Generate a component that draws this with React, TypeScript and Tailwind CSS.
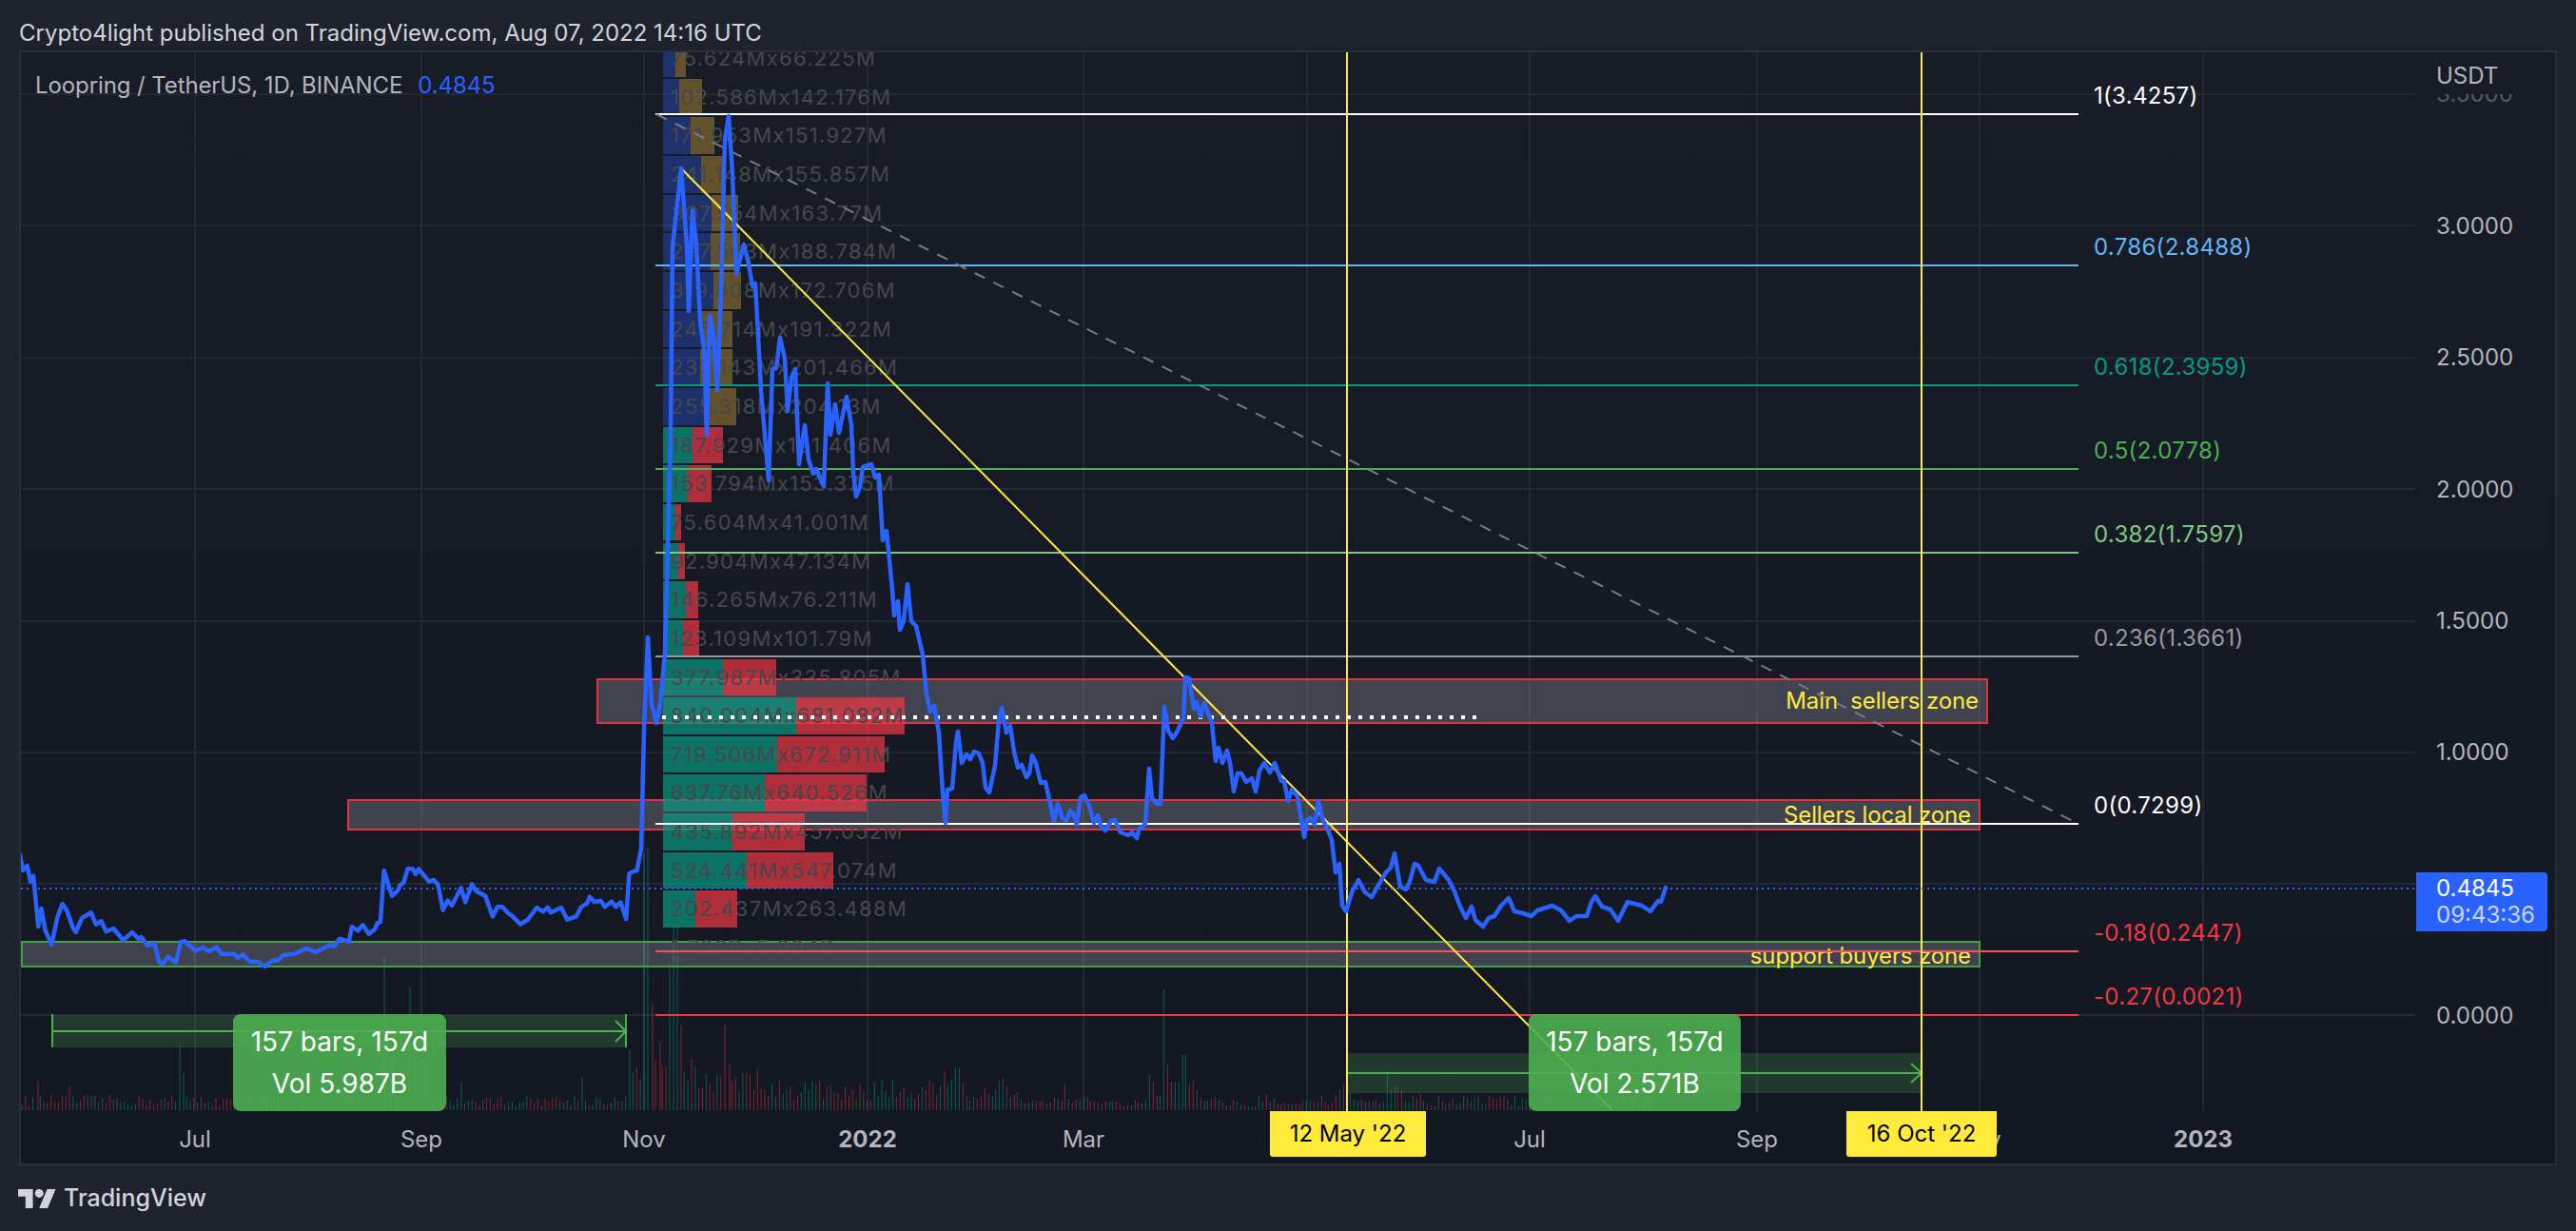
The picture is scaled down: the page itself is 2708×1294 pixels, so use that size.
import React from "react";

type Row = { a: number; b: number; label: string; kind: "cool" | "warm" | "none" };

const rows: Row[] = [
  { a: 75.624, b: 66.225, label: "75.624Mx66.225M", kind: "cool" },
  { a: 102.586, b: 142.176, label: "102.586Mx142.176M", kind: "cool" },
  { a: 171.953, b: 151.927, label: "171.953Mx151.927M", kind: "cool" },
  { a: 241.148, b: 155.857, label: "241.148Mx155.857M", kind: "cool" },
  { a: 307.554, b: 163.77, label: "307.554Mx163.77M", kind: "cool" },
  { a: 297.563, b: 188.784, label: "297.563Mx188.784M", kind: "cool" },
  { a: 319.808, b: 172.706, label: "319.808Mx172.706M", kind: "cool" },
  { a: 245.714, b: 191.322, label: "245.714Mx191.322M", kind: "cool" },
  { a: 233.143, b: 201.466, label: "233.143Mx201.466M", kind: "cool" },
  { a: 255.318, b: 204.13, label: "255.318Mx204.13M", kind: "cool" },
  { a: 187.929, b: 191.406, label: "187.929Mx191.406M", kind: "warm" },
  { a: 153.794, b: 153.375, label: "153.794Mx153.375M", kind: "warm" },
  { a: 75.604, b: 41.001, label: "75.604Mx41.001M", kind: "warm" },
  { a: 92.904, b: 47.134, label: "92.904Mx47.134M", kind: "warm" },
  { a: 146.265, b: 76.211, label: "146.265Mx76.211M", kind: "warm" },
  { a: 123.109, b: 101.79, label: "123.109Mx101.79M", kind: "warm" },
  { a: 377.987, b: 335.805, label: "377.987Mx335.805M", kind: "warm" },
  { a: 840.004, b: 681.082, label: "840.004Mx681.082M", kind: "warm" },
  { a: 719.506, b: 672.911, label: "719.506Mx672.911M", kind: "warm" },
  { a: 637.76, b: 640.526, label: "637.76Mx640.526M", kind: "warm" },
  { a: 435.892, b: 457.052, label: "435.892Mx457.052M", kind: "warm" },
  { a: 524.441, b: 547.074, label: "524.441Mx547.074M", kind: "warm" },
  { a: 202.437, b: 263.488, label: "202.437Mx263.488M", kind: "warm" },
  { a: 0, b: 0, label: "1.792Bx5.904B", kind: "none" },
];

const PX_PER_M = 0.1671;

const leftPart: [number, number][] = [
  [33,145],[38,195],[45,180],[50,230],[55,212],[63,372],[68,315],[75,385],[85,428],[95,340],[103,300],[110,320],[120,375],[125,390],[135,345],[150,328],[158,365],[167,355],[175,388],[187,378],[203,415],[218,390],[228,410],[233,405],[243,432],[255,427],[262,483],[268,490],[277,467],[290,485],[298,420],[305,418],[322,448],[335,438],[345,450],[357,437],[365,458],[385,458],[392,470],[400,460],[412,483],[425,483],[436,498],[448,480],[458,478],[467,462],[485,458],[505,440],[520,452],[545,430],[550,435],[560,410],[575,420],[580,372],[590,385],[598,367],[608,395],[618,380],[622,360],[627,358],[633,195],[646,275],[655,260],[660,240],[665,235],[672,190],[680,190],[685,207],[690,190],[707,230],[715,225],[722,240],[730,320],[738,290],[745,305],[760,250],[767,295],[778,238],[785,260],[800,275],[812,340],[820,310],[828,310],[838,330],[845,340],[858,365],[870,350],[885,312],[895,325],[903,312],[908,328],[925,312],[935,350],[950,340],[958,310],[968,298],[972,278],[980,295],[990,290],[997,310],[1008,293],[1015,310],[1023,295],[1032,348],[1037,205],[1045,197],[1050,195],
];

const rest: [number, number][] = [
  [674,892],[677,767],[681,670],[685,740],[690,760],[694,740],[699,687],[704,500],[705,460],[707,260],[716,177],[722,257],[724,327],[728,221],[732,257],[736,337],[740,367],[743,457],[746,332],[750,353],[754,410],[758,307],[762,147],[766,122],[770,183],[774,288],[782,257],[787,277],[791,301],[794,298],[797,353],[800,410],[808,505],[812,388],[816,387],[820,355],[825,377],[828,432],[832,397],[836,388],[840,488],[846,447],[850,483],[855,498],[858,493],[866,511],[870,403],[873,457],[878,425],[882,455],[890,417],[895,447],[897,497],[900,522],[904,512],[907,491],[916,488],[920,502],[924,499],[928,568],[932,558],[938,620],[940,647],[944,632],[946,662],[950,653],[954,614],[958,653],[963,658],[970,688],[974,730],[978,748],[982,742],[987,770],[991,833],[994,865],[996,830],[1001,829],[1005,780],[1007,769],[1011,802],[1016,793],[1020,798],[1024,790],[1029,792],[1033,802],[1036,828],[1040,833],[1046,805],[1050,757],[1053,744],[1058,770],[1062,763],[1066,790],[1070,807],[1074,804],[1079,817],[1082,813],[1085,794],[1089,802],[1094,823],[1099,822],[1108,863],[1112,845],[1117,860],[1121,863],[1125,852],[1128,855],[1132,867],[1136,838],[1140,836],[1145,847],[1150,865],[1154,857],[1158,870],[1162,873],[1168,863],[1172,862],[1178,875],[1186,878],[1190,875],[1195,881],[1198,870],[1201,870],[1204,865],[1208,808],[1211,839],[1216,845],[1220,845],[1224,743],[1228,768],[1233,776],[1237,770],[1244,755],[1246,712],[1250,713],[1255,745],[1258,738],[1262,753],[1266,739],[1274,760],[1278,800],[1281,786],[1285,802],[1290,789],[1293,802],[1297,832],[1301,813],[1305,813],[1310,822],[1316,818],[1320,832],[1324,810],[1329,802],[1335,812],[1340,802],[1347,821],[1350,821],[1354,842],[1358,830],[1364,837],[1366,850],[1371,880],[1374,862],[1378,860],[1382,867],[1386,842],[1391,863],[1395,870],[1400,883],[1404,917],[1408,908],[1411,952],[1415,958],[1421,938],[1428,925],[1435,938],[1442,943],[1448,932],[1457,917],[1462,912],[1466,897],[1472,932],[1478,935],[1482,927],[1487,908],[1491,910],[1499,925],[1508,927],[1513,913],[1523,925],[1529,937],[1535,953],[1541,965],[1547,953],[1551,967],[1559,974],[1565,965],[1571,963],[1578,952],[1586,944],[1592,958],[1601,960],[1610,963],[1616,957],[1632,952],[1641,957],[1650,968],[1657,963],[1668,963],[1673,948],[1677,942],[1684,953],[1693,956],[1701,968],[1711,948],[1718,950],[1726,952],[1735,958],[1743,947],[1746,948],[1751,933],
];

const pricePoints = [
  ...leftPart.map(([x, y]) => [x / 1.568, 850 + y / 3] as [number, number]),
  ...rest,
]
  .map(([x, y]) => `${x.toFixed(1)},${y.toFixed(1)}`)
  .join(" ");

const measured =
  "1t405 13t365 25t368 37r417 49t456 58r470 70t459 82r465 94r456 106r430 118r447 130t456 140t438 151t408 163t402 175r426 187t459 199r453 208r444 220t465 232r477 244t474 256t471 268r474 280r471 289r474 301t480 313r474 325r462 337t465 349r471 358r420 370t465 382r477 394r468 406t468 418t462 430r462 439r474 451r474 463t477 475r480 487r474 499t474 508t474 520r474 532r480 544r489 556r486 568t486 580r468 589t474 601r480 613t468 625t390 637r414 649r456 658t456 670t120 682r357 694r411 706t414 718t414 730t327 739t324 751r420 763r408 775t438 787r462 799t471 808t471 820r465 832r459 844t471 856r477 868t486 880r486 889r468 901t474 913t483 925r483 937t489 949t489 958r489 970t456 982t471 994r450 1006r471 1018t465 1030r480 1039r483 1051r477 1063r480 1075t483 1087r480 1099r483 1108r471 1120t474 1132t471 1144r474 1156t474 1168r456 1180r474 1189r483 1201r477 1213r453 1225t435 1237r420 1249r435 1258t444 1270t468 1282t471 1294r468 1306t474 1318r474 1330t474 1339r471 1351t480 1363t474 1375t384 1387t438 1399t426 1408r423 1420r438 1432t471 1444t474 1456t456 1468r462 1480r450 1489t471 1501r480 1513r486 1525r489 1537t456 1549r471";

const spikes: [number, number, "t" | "r"][] = [
  [40,1137,"r"],[73,1142,"r"],[189,1098,"t"],[193,1128,"t"],[404,1007,"t"],[411,1110,"r"],[431,1038,"t"],[435,1112,"r"],[485,1137,"t"],[612,1132,"t"],[662,1104,"t"],[677,898,"t"],[681,890,"t"],[686,1055,"r"],[689,1115,"r"],[694,1095,"r"],[704,1013,"t"],[708,972,"t"],[712,972,"t"],[716,1078,"r"],[727,1113,"r"],[762,1077,"r"],[767,1119,"r"],[993,1127,"r"],
];

function buildVolume() {
  const bars: { x: number; top: number; c: string }[] = [];
  let s = 12345;
  const rnd = () => {
    s = (s * 16807) % 2147483647;
    return s / 2147483647;
  };
  const BASE = 1167;
  for (let i = 0; i < 449; i++) {
    const x = 23 + 3.847 * i;
    if (x >= 999 && x < 1517) continue;
    if (x > 1736) continue;
    const spike = spikes.find((p) => Math.abs(p[0] - x) < 1.93);
    if (spike) {
      bars.push({ x: spike[0], top: spike[1], c: spike[2] });
      continue;
    }
    let h = 5 + rnd() * 11;
    if (x > 660 && x < 800) h = 18 + rnd() * 30;
    else if (x >= 800 && x < 1000) h = 10 + rnd() * 22;
    bars.push({ x, top: BASE - h, c: rnd() > 0.5 ? "t" : "r" });
  }
  measured.split(" ").forEach((tok) => {
    const m = tok.match(/^(\d+)([tr])(\d+)$/);
    if (m) bars.push({ x: 1000 + Number(m[1]) / 3, top: 1000 + Number(m[3]) / 3, c: m[2] });
  });
  return { bars, BASE };
}
const volume = buildVolume();

const gridY = [99, 237, 376, 514, 653, 791, 929, 1067];
const gridX = [205, 443, 677, 912, 1139, 1374, 1608, 1847, 2081, 2316];

const PLOT_TOP = 55;
const FIB_LABEL_LIFT = 19;

const fibs: { y: number; stroke: string; text: string; cls: string }[] = [
  { y: 120, stroke: "#ffffff", text: "1(3.4257)", cls: "text-white" },
  { y: 279, stroke: "#64b5f6", text: "0.786(2.8488)", cls: "text-[#64b5f6]" },
  { y: 405, stroke: "#089981", text: "0.618(2.3959)", cls: "text-[#089981]" },
  { y: 493, stroke: "#4caf50", text: "0.5(2.0778)", cls: "text-[#4caf50]" },
  { y: 581, stroke: "#81c784", text: "0.382(1.7597)", cls: "text-[#81c784]" },
  { y: 690, stroke: "#9598a1", text: "0.236(1.3661)", cls: "text-[#9598a1]" },
  { y: 866, stroke: "#ffffff", text: "0(0.7299)", cls: "text-white" },
  { y: 1000, stroke: "#f7525f", text: "-0.18(0.2447)", cls: "text-[#f23645]" },
  { y: 1067, stroke: "#f23645", text: "-0.27(0.0021)", cls: "text-[#f23645]" },
];

function RangeLabel({ vol, className }: { vol: string; className: string }) {
  return (
    <div
      className={`absolute top-[1011px] flex h-[102px] flex-col items-center justify-center rounded-lg bg-[#4caf50]/90 text-[28px] leading-[44px] text-white ${className}`}
    >
      <span>157 bars, 157d</span>
      <span>{vol}</span>
    </div>
  );
}

function Plot() {
  return (
    <div className="relative h-[1113px] w-[2517px] shrink-0 overflow-hidden">
      <svg className="absolute left-0 top-0 h-[1113px] w-[2517px]" viewBox="22 55 2517 1113">
        {gridY.map((y) => (
          <line key={y} x1={22} x2={2539} y1={y} y2={y} stroke="#242832" strokeWidth={2} />
        ))}
        {gridX.map((x) => (
          <line key={x} x1={x} x2={x} y1={55} y2={1168} stroke="#242832" strokeWidth={2} />
        ))}
        {volume.bars.map((b, i) => (
          <line
            key={i}
            x1={b.x}
            x2={b.x}
            y1={b.top}
            y2={volume.BASE}
            stroke={b.c === "t" ? "rgba(8,153,129,0.55)" : "rgba(242,54,69,0.5)"}
            strokeWidth={1}
          />
        ))}
      </svg>

      <div className="absolute left-[605px] top-[658px] flex h-[48px] w-[1463px] items-center justify-end border-2 border-[#e2323f] bg-[rgba(178,181,190,0.28)] pr-2 text-[24px] leading-none tracking-[-0.12px] whitespace-pre text-[#ffeb3b]">
        Main  sellers zone
      </div>
      <div className="absolute left-[343px] top-[785px] flex h-[33px] w-[1717px] items-center justify-end border-2 border-[#e2323f] bg-[rgba(178,181,190,0.28)] pr-2 text-[24px] leading-none tracking-[-0.12px] text-[#ffeb3b]">
        Sellers local zone
      </div>
      <div className="absolute left-0 top-[934px] flex h-[28px] w-[2060px] items-center justify-end border-2 border-[#43a047] bg-[rgba(178,181,190,0.28)] pr-2 text-[24px] leading-none tracking-[-0.12px] text-[#ffeb3b]">
        <span className="translate-y-[2px]">support buyers zone</span>
      </div>

      <div className="absolute left-[675px] top-[-13px] flex flex-col gap-[2.07px]">
        {rows.map((r) => (
          <div key={r.label} className="relative flex h-[38.6px] w-[300px]">
            {r.kind !== "none" && (
              <>
                <div
                  className={r.kind === "cool" ? "h-full bg-[rgba(41,98,255,0.33)]" : "h-full bg-[#089981]/70"}
                  style={{ width: r.a * PX_PER_M }}
                />
                <div
                  className={r.kind === "cool" ? "h-full bg-[rgba(255,200,60,0.32)]" : "h-full bg-[#f23645]/70"}
                  style={{ width: r.b * PX_PER_M }}
                />
              </>
            )}
            <span className="absolute left-[8px] top-0 text-[22px] leading-[38.6px] tracking-[1.3px] whitespace-nowrap text-[#47474b]">
              {r.label}
            </span>
          </div>
        ))}
      </div>

      <svg className="absolute left-0 top-0 h-[1113px] w-[2517px]" viewBox="22 55 2517 1113" fill="none">
        <rect x={55} y={1067} width={603} height={34} fill="rgba(76,175,80,0.23)" />
        <rect x={1416} y={1107} width={604} height={42} fill="rgba(76,175,80,0.23)" />
        <path d="M55 1066V1101M658 1066V1101M55 1084H658M647 1073L658 1084L647 1095" stroke="#4caf50" strokeWidth={2} />
        <path d="M1416 1128H2020M2009 1118L2020 1128L2009 1138" stroke="#4caf50" strokeWidth={2} />
        {fibs.map((f) => (
          <line key={f.y} x1={689} x2={2185} y1={f.y} y2={f.y} stroke={f.stroke} strokeWidth={2} />
        ))}
        <line x1={690} y1={120} x2={2185} y2={866} stroke="#787b86" strokeWidth={2} strokeDasharray="12 10" />
        <line x1={717} y1={178} x2={1695} y2={1167} stroke="#ffeb3b" strokeWidth={2} />
        <line x1={1416} x2={1416} y1={55} y2={1168} stroke="#ffeb3b" strokeWidth={2} />
        <line x1={2020} x2={2020} y1={55} y2={1168} stroke="#ffeb3b" strokeWidth={2} />
        <line x1={696} x2={1552} y1={754} y2={754} stroke="#ffffff" strokeWidth={4} strokeDasharray="4 8" />
        <line x1={22} x2={2539} y1={934} y2={934} stroke="#2962ff" strokeWidth={2} strokeDasharray="2 4" />
        <polyline points={pricePoints} stroke="#2962ff" strokeWidth={4.5} strokeLinejoin="round" strokeLinecap="round" />
      </svg>

      <div className="absolute left-[15px] top-[35px] flex -translate-y-1/2 gap-4 text-[24px] leading-none tracking-[-0.1px]">
        <span className="text-[#b2b5be]">Loopring / TetherUS, 1D, BINANCE</span>
        <span className="text-[#2962ff]">0.4845</span>
      </div>

      {fibs.map((f) => (
        <span
          key={f.text}
          className={`absolute left-[2179px] -translate-y-1/2 text-[24px] leading-none tracking-[0.3px] ${f.cls}`}
          style={{ top: f.y - PLOT_TOP - FIB_LABEL_LIFT }}
        >
          {f.text}
        </span>
      ))}

      <RangeLabel vol="Vol 5.987B" className="left-[223px] w-[224px]" />
      <RangeLabel vol="Vol 2.571B" className="left-[1585px] w-[223px]" />
    </div>
  );
}

function PriceAxis() {
  return (
    <div className="relative flex-1 overflow-hidden pl-[22px] text-[24px] leading-none text-[#b2b5be]">
      <div className="flex h-[44px] items-end bg-[#181c27] pb-[7px] -ml-[22px] pl-[22px] relative z-10">USDT</div>
      <div className="flex flex-col -mt-[69px]">
        <div className="flex h-[138.45px] items-center opacity-40">3.5000</div>
        <div className="flex h-[138.45px] items-center">3.0000</div>
        <div className="flex h-[138.45px] items-center">2.5000</div>
        <div className="flex h-[138.45px] items-center">2.0000</div>
        <div className="flex h-[138.45px] items-center">1.5000</div>
        <div className="flex h-[138.45px] items-center">1.0000</div>
        <div className="h-[138.45px]" />
        <div className="flex h-[138.45px] items-center">0.0000</div>
      </div>
      <div className="absolute left-[1px] top-[862px] flex h-[62px] w-[138px] flex-col justify-center rounded-r-[4px] bg-[#2962ff] pl-[21px] leading-[28px] text-white">
        <span>0.4845</span>
        <span className="text-white/75">09:43:36</span>
      </div>
    </div>
  );
}

function TimeAxis() {
  return (
    <div className="relative flex flex-1 items-start pl-[64px] pt-[18px] text-center text-[24px] leading-none text-[#b2b5be]">
      <span className="w-[238px]">Jul</span>
      <span className="w-[238px]">Sep</span>
      <span className="w-[230px]">Nov</span>
      <span className="w-[240px] font-bold">2022</span>
      <span className="w-[214px]">Mar</span>
      <span className="w-[256px]">May</span>
      <span className="w-[212px]">Jul</span>
      <span className="w-[266px]">Sep</span>
      <span className="w-[202px]">Nov</span>
      <span className="w-[268px] font-bold">2023</span>
      <div className="absolute left-[1313px] top-0 flex h-[48px] w-[164px] items-center justify-center rounded-b-[3px] bg-[#ffeb3b] text-black">
        12 May '22
      </div>
      <div className="absolute left-[1919px] top-0 flex h-[48px] w-[158px] items-center justify-center rounded-b-[3px] bg-[#ffeb3b] text-black">
        16 Oct '22
      </div>
    </div>
  );
}

export default function App() {
  return (
    <div className="flex h-[1294px] w-[2708px] flex-col overflow-hidden bg-[#1e222d] font-[Inter,sans-serif]">
      <header className="flex h-[53px] shrink-0 items-end pb-[6px] pl-5 text-[24px] leading-none text-[#d1d4dc]">
        Crypto4light published on TradingView.com, Aug 07, 2022 14:16 UTC
      </header>
      <main className="ml-5 flex h-[1172px] w-[2668px] shrink-0 flex-col border-2 border-[#2a2e39] bg-linear-to-b from-[#181c27] to-[#131722]">
        <div className="flex h-[1113px] shrink-0">
          <Plot />
          <PriceAxis />
        </div>
        <TimeAxis />
      </main>
      <footer className="flex flex-1 items-center gap-2 pl-[19px] text-[#d1d4dc]">
        <svg width="40" height="20" viewBox="0 4 36 18" fill="currentColor">
          <path d="M14 22H7V11H0V4h14v18zM28 22h-8l7.5-18h8L28 22z" />
          <circle cx="20" cy="8" r="4" />
        </svg>
        <span className="text-[25px] font-medium leading-none">TradingView</span>
      </footer>
    </div>
  );
}
